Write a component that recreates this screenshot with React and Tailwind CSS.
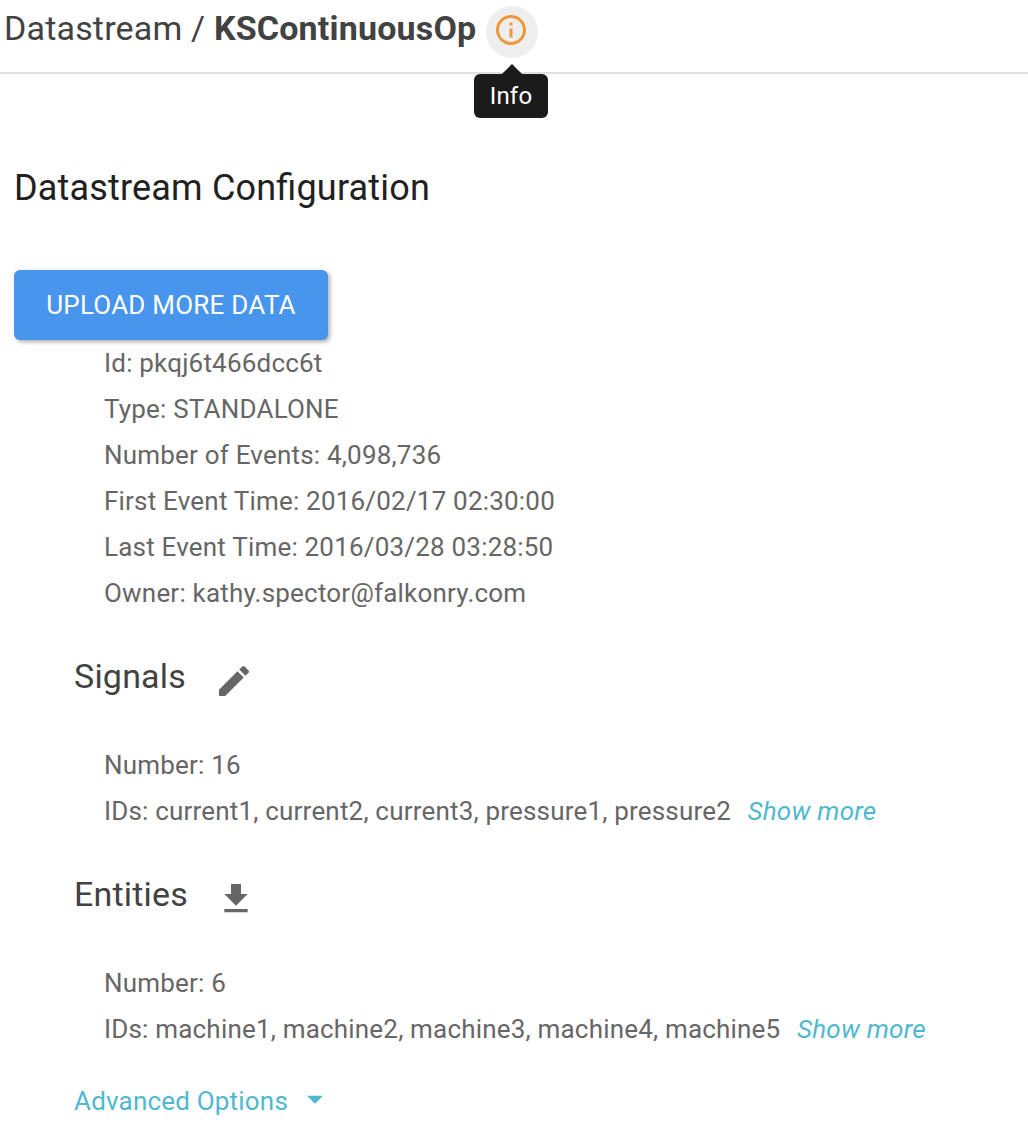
import { MdInfoOutline, MdEdit, MdFileDownload, MdArrowDropDown } from "react-icons/md";

const details = [
  "Id: pkqj6t466dcc6t",
  "Type: STANDALONE",
  "Number of Events: 4,098,736",
  "First Event Time: 2016/02/17 02:30:00",
  "Last Event Time: 2016/03/28 03:28:50",
  "Owner: kathy.spector@falkonry.com",
];

function Section({ title, Icon, number, ids }) {
  return (
    <section className="h-[218px] pl-[74px]">
      <div className="flex h-[60px] items-center">
        <h2 className="text-[34px] leading-[60px] tracking-[0.2px] text-[#424242]">{title}</h2>
        <Icon className="mt-[9px] ml-[27.8px] size-10 text-[#666666]" />
      </div>
      <div className="pt-9 pl-[30px] text-[26px] leading-[46px] tracking-[0.19px] text-[#666666]">
        <p>Number: {number}</p>
        <p className="whitespace-nowrap">
          IDs: {ids}
          <a className="ml-[16.5px] tracking-[0.25px] text-[#4fb8d0] italic">Show more</a>
        </p>
      </div>
    </section>
  );
}

export default function App() {
  return (
    <main className="h-[1132px] w-[1028px] overflow-hidden bg-white font-['Roboto',sans-serif]">
      <header className="flex h-[74px] border-b-2 border-[#e0e0e0] pl-1 text-[34px] leading-[56px] text-[#424242]">
        <h1 className="w-[472px] whitespace-nowrap tracking-[0.18px]">
          Datastream / <b>KSContinuousOp</b>
        </h1>
        <div className="relative mt-1.5 ml-2.5 flex size-[52px] items-center justify-center rounded-full bg-[#eeeeee]">
          <MdInfoOutline className="mr-0.5 mb-1 size-9 text-[#ee983c]" />
          <div className="absolute top-[58px] left-4 size-0 border-x-[10px] border-b-[10px] border-x-transparent border-b-[#1b1b1b]" />
          <div className="absolute top-[68px] left-[-12px] h-11 w-[74px] rounded-md bg-[#1b1b1b] text-center text-[24px] leading-[44px] tracking-[0.2px] text-white">
            Info
          </div>
        </div>
      </header>
      <h2 className="mt-[84px] pl-3.5 text-[36px] leading-[60px] tracking-[0.18px] text-[#212121] [font-feature-settings:'liga']">
        Datastream Configuration
      </h2>
      <button className="mt-[52px] ml-3.5 block h-[70px] w-[314px] rounded-md bg-[#4795ec] text-[26px] tracking-[0.23px] text-white shadow-[2px_2px_4px_rgba(0,0,0,0.32)]">
        UPLOAD MORE DATA
      </button>
      <div className="h-[306px] pl-[104px] text-[26px] leading-[46px] tracking-[0.2px] text-[#666666]">
        {details.map((text) => (
          <p key={text}>{text}</p>
        ))}
      </div>
      <Section title="Signals" Icon={MdEdit} number="16" ids="current1, current2, current3, pressure1, pressure2" />
      <Section title="Entities" Icon={MdFileDownload} number="6" ids="machine1, machine2, machine3, machine4, machine5" />
      <div className="flex h-[38px] items-center pl-[74px] text-[26px] tracking-[0.19px] text-[#4fb8d0]">
        Advanced Options
        <MdArrowDropDown className="mb-1 ml-[7.5px] size-[38px]" />
      </div>
    </main>
  );
}
